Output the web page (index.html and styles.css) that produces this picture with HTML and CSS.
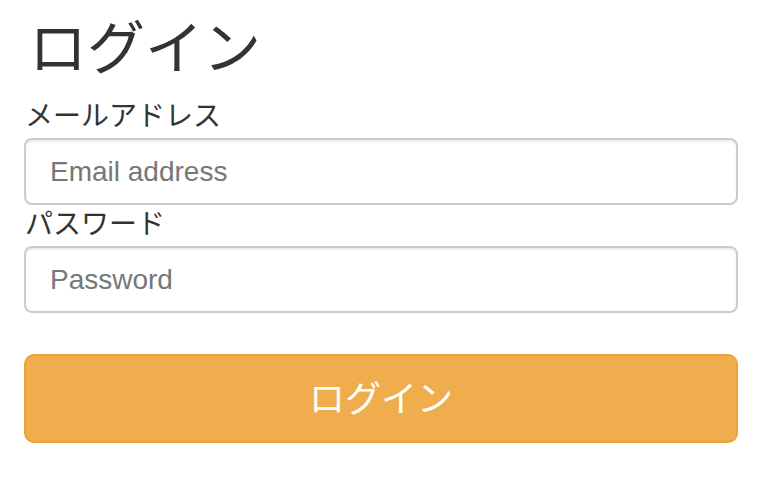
FILE: index.html
```html
<!DOCTYPE html>
<html lang="ja">
<head>
<meta charset="utf-8">
<title>ログイン</title>
<link rel="stylesheet" href="styles.css">
</head>
<body>
<main class="page">
  <h1 class="title">ログイン</h1>
  <form class="login-form">
    <label class="field-label" for="email">メールアドレス</label>
    <input class="field-input" id="email" type="email" placeholder="Email address">
    <label class="field-label" for="password">パスワード</label>
    <input class="field-input" id="password" type="password" placeholder="Password">
    <button class="submit-btn" type="submit">ログイン</button>
  </form>
</main>
</body>
</html>
```
FILE: styles.css
```css
html, body {
  margin: 0;
  padding: 0;
  background: #ffffff;
}
body {
  font-family: "Noto Sans CJK JP", "Liberation Sans", sans-serif;
  color: #333333;
}
.page {
  width: 714px;
  padding: 0 0 0 24px;
}
.title {
  margin: 0;
  padding: 8px 0 0 5px;
  font-size: 58px;
  font-weight: normal;
  line-height: 72px;
  color: #333333;
}
.login-form {
  display: flex;
  flex-direction: column;
  margin-top: 17px;
}
.field-label {
  display: block;
  font-size: 28px;
  line-height: 34px;
  margin: 0 0 7px 1px;
  color: #333333;
}
.field-input {
  box-sizing: border-box;
  height: 67px;
  width: 100%;
  margin: 0 0 0 0;
  padding: 0 24px;
  border: 2px solid #cccccc;
  border-radius: 8px;
  box-shadow: inset 0 2px 2px rgba(0, 0, 0, 0.075);
  font-family: "Liberation Sans", Arial, sans-serif;
  font-size: 28px;
  color: #555555;
  background: #ffffff;
  outline: none;
}
.field-input::placeholder {
  color: #777777;
  opacity: 1;
}
.submit-btn {
  box-sizing: border-box;
  margin-top: 41px;
  height: 89px;
  width: 100%;
  padding: 0 0 6px 0;
  border: 2px solid #eea236;
  border-radius: 10px;
  background: #f0ad4e;
  color: #ffffff;
  font-family: "Noto Sans CJK JP", "Liberation Sans", sans-serif;
  font-size: 36px;
  cursor: pointer;
}
```
